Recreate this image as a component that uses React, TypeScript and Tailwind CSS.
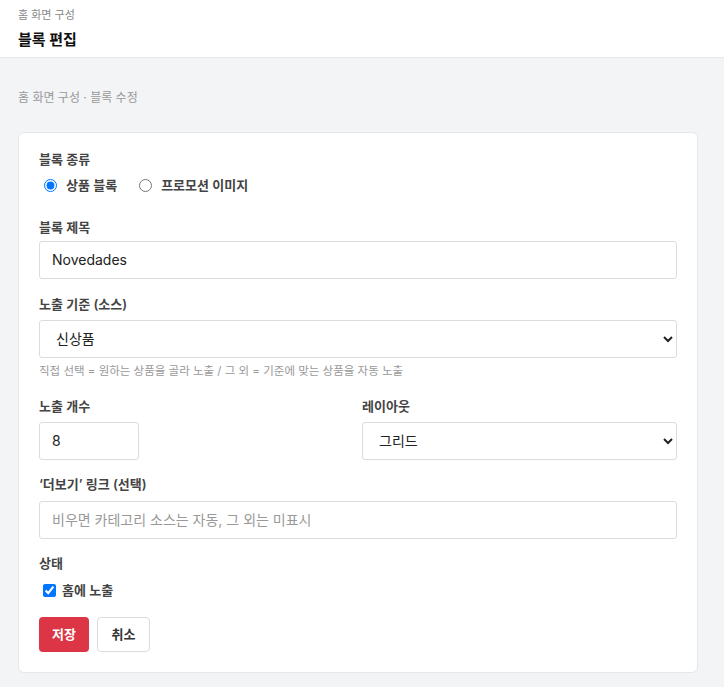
export default function App() {
  return (
    <div className="min-h-[687px] bg-[#f3f4f6] text-[#222] [font-family:Inter,'Noto_Sans_CJK_KR',sans-serif]">
      <header className="h-[58px] border-b border-[#e5e7eb] bg-white px-[18px] pt-[8px]">
        <div className="text-[11px] leading-[14px] text-[#888]">홈 화면 구성</div>
        <h1 className="mt-[8px] text-[15px] font-bold leading-[20px] text-[#111]">블록 편집</h1>
      </header>

      <div className="px-[18px] pt-[32px] pb-[16px]">
        <p className="text-[12px] leading-[16px] text-[#999]">홈 화면 구성 · 블록 수정</p>

        <form className="mt-[26px] w-[680px] rounded-md border border-[#e5e7eb] bg-white px-[20px] pt-[17px] pb-[20px]">
          <div>
            <div className="text-[13px] font-semibold leading-[18px] text-[#444]">블록 종류</div>
            <div className="mt-[8px] flex items-center gap-[22px] text-[13px] font-semibold text-[#444]">
              <label className="flex items-center gap-[9px]">
                <input type="radio" name="kind" defaultChecked className="m-0 ml-[5px] h-[13px] w-[13px]" />
                상품 블록
              </label>
              <label className="flex items-center gap-[9px]">
                <input type="radio" name="kind" className="m-0 h-[13px] w-[13px]" />
                프로모션 이미지
              </label>
            </div>
          </div>

          <div className="mt-[22px]">
            <label className="block text-[13px] font-semibold leading-[18px] text-[#444]">블록 제목</label>
            <input
              type="text"
              defaultValue="Novedades"
              className="mt-[5px] h-[38px] w-full rounded-[3px] border border-[#dcdcdc] px-3 text-[14px] text-[#222] outline-none"
            />
          </div>

          <div className="mt-[16px]">
            <label className="block text-[13px] font-semibold leading-[18px] text-[#444]">노출 기준 (소스)</label>
            <select
              defaultValue="new"
              className="mt-[7px] h-[38px] w-full rounded-[3px] border border-[#dcdcdc] bg-white px-3 text-[14px] text-[#222] outline-none"
            >
              <option value="new">신상품</option>
              <option value="pick">직접 선택</option>
            </select>
            <p className="mt-[6px] text-[11.5px] leading-[15px] text-[#999]">
              직접 선택 = 원하는 상품을 골라 노출 / 그 외 = 기준에 맞는 상품을 자동 노출
            </p>
          </div>

          <div className="mt-[18px] grid grid-cols-2 gap-2">
            <div>
              <label className="block text-[13px] font-semibold leading-[18px] text-[#444]">노출 개수</label>
              <input
                type="number"
                defaultValue={8}
                className="mt-[7px] h-[38px] w-[100px] rounded-[3px] border border-[#dcdcdc] px-3 text-[14px] text-[#222] outline-none [appearance:textfield] [&::-webkit-inner-spin-button]:appearance-none"
              />
            </div>
            <div>
              <label className="block text-[13px] font-semibold leading-[18px] text-[#444]">레이아웃</label>
              <select
                defaultValue="grid"
                className="mt-[7px] h-[38px] w-full rounded-[3px] border border-[#dcdcdc] bg-white px-3 text-[14px] text-[#222] outline-none"
              >
                <option value="grid">그리드</option>
                <option value="slide">슬라이드</option>
              </select>
            </div>
          </div>

          <div className="mt-[15px]">
            <label className="block text-[13px] font-semibold leading-[18px] text-[#444]">‘더보기’ 링크 (선택)</label>
            <input
              type="text"
              placeholder="비우면 카테고리 소스는 자동, 그 외는 미표시"
              className="mt-[8px] h-[38px] w-full rounded-[3px] border border-[#dcdcdc] px-3 text-[14px] text-[#222] outline-none placeholder:text-[#999]"
            />
          </div>

          <div className="mt-[15px]">
            <div className="text-[13px] font-semibold leading-[18px] text-[#444]">상태</div>
            <label className="mt-[9px] flex items-center gap-[6px] text-[13px] font-semibold text-[#444]">
              <input type="checkbox" defaultChecked className="m-0 ml-[4px] h-[13px] w-[13px]" />
              홈에 노출
            </label>
          </div>

          <div className="mt-[17px] flex gap-2">
            <button type="button" className="h-[35px] w-[50px] rounded-[4px] bg-[#dc3545] text-[13px] font-bold text-white">
              저장
            </button>
            <button type="button" className="h-[35px] w-[53px] rounded-[4px] border border-[#dcdcdc] bg-white text-[13px] font-bold text-[#333]">
              취소
            </button>
          </div>
        </form>
      </div>
    </div>
  );
}
